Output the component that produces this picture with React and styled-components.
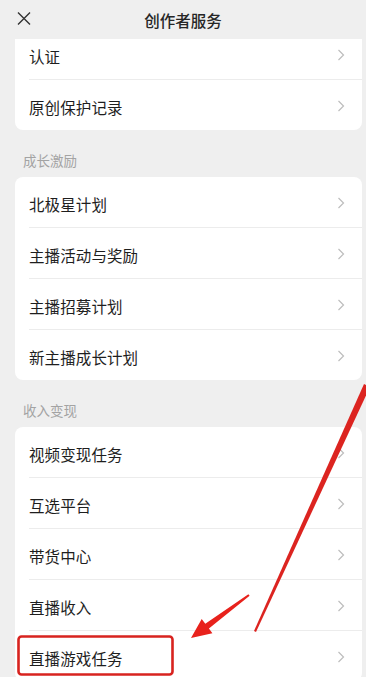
import React from 'react';
import styled, { createGlobalStyle } from 'styled-components';

const GlobalStyle = createGlobalStyle`
  html, body {
    margin: 0;
    padding: 0;
    background: #efefef;
  }
  body {
    font-family: "Noto Sans CJK SC", "Noto Sans", sans-serif;
  }
`

const Page = styled.div`
  position: relative;
  width: 366px;
  height: 677px;
  overflow: hidden;
  background: #efefef;
  display: flex;
  flex-direction: column;
`
const Header = styled.header`
  position: relative;
  z-index: 2;
  flex: 0 0 39px;
  display: flex;
  align-items: center;
  justify-content: center;
  background: #efefef;
`
const CloseBtn = styled.button`
  position: absolute;
  left: 15px;
  top: 9px;
  width: 18px;
  height: 18px;
  padding: 0;
  border: none;
  background: transparent;
  display: flex;
  align-items: center;
  justify-content: center;
`
const Title = styled.h1`
  margin: 0;
  padding-top: 1px;
  font-size: 15.5px;
  font-weight: 500;
  color: #262626;
`
const Scroll = styled.main`
  flex: 1 1 auto;
  overflow: hidden;
`
const List = styled.div`
  margin-top: -10px;
`
const Card = styled.section`
  margin: 0 4px 0 15px;
  background: #fff;
  border-radius: 8px;
  overflow: hidden;
`
const Row = styled.div`
  height: 50px;
  display: flex;
  align-items: center;
  justify-content: space-between;
  padding: 0 17px 0 14px;
  & + & {
    border-top: 1px solid #ececec;
    margin-left: 14px;
    padding-left: 0;
  }
`
const RowText = styled.span`
  padding-top: 4px;
  font-size: 15.5px;
  color: #1e1e1e;
  letter-spacing: 0.1px;
`
const ChevronBox = styled.span`
  display: flex;
  padding-top: 2px;
`
const SectionLabel = styled.div`
  height: 47px;
  box-sizing: border-box;
  padding: 21px 0 0 23px;
  font-size: 13.5px;
  line-height: 18px;
  color: #a3a3a3;
`
const Overlay = styled.svg`
  position: absolute;
  left: 0;
  top: 0;
  z-index: 3;
  pointer-events: none;
`

const Chevron = () => (
  <ChevronBox>
    <svg width="8" height="12" viewBox="0 0 8 12">
      <path d="M1.5 1 L6.5 6 L1.5 11" fill="none" stroke="#bdbdbd" strokeWidth="1.2" />
    </svg>
  </ChevronBox>
)

const sections = [
  { label: null, items: ['认证', '原创保护记录'] },
  { label: '成长激励', items: ['北极星计划', '主播活动与奖励', '主播招募计划', '新主播成长计划'] },
  { label: '收入变现', items: ['视频变现任务', '互选平台', '带货中心', '直播收入', '直播游戏任务'] },
]

const App = () => {
  return (
    <Page>
      <GlobalStyle />
      <Header>
        <CloseBtn>
          <svg width="14" height="13" viewBox="0 0 14 13">
            <path d="M1 0.5 L13 12.5 M13 0.5 L1 12.5" stroke="#333" strokeWidth="1.4" />
          </svg>
        </CloseBtn>
        <Title>创作者服务</Title>
      </Header>
      <Scroll>
        <List>
          {sections.map((sec, i) => (
            <React.Fragment key={i}>
              {sec.label && <SectionLabel>{sec.label}</SectionLabel>}
              <Card>
                {sec.items.map((item) => (
                  <Row key={item}>
                    <RowText>{item}</RowText>
                    <Chevron />
                  </Row>
                ))}
              </Card>
            </React.Fragment>
          ))}
        </List>
      </Scroll>
      <Overlay width="366" height="677" viewBox="0 0 366 677">
        <polygon points="364,384 370,387 256,632 254,631" fill="#dc2420" />
        <polygon
          points="249.6,595.8 208.9,628.5 212.4,633.3 191,638 201.7,618.9 205.3,623.7 248.4,594.2"
          fill="#e8221c"
        />
        <rect x="18.5" y="636.5" width="154" height="38" rx="3" fill="none" stroke="#d8231f" strokeWidth="2.6" />
      </Overlay>
    </Page>
  )
}

export default App
